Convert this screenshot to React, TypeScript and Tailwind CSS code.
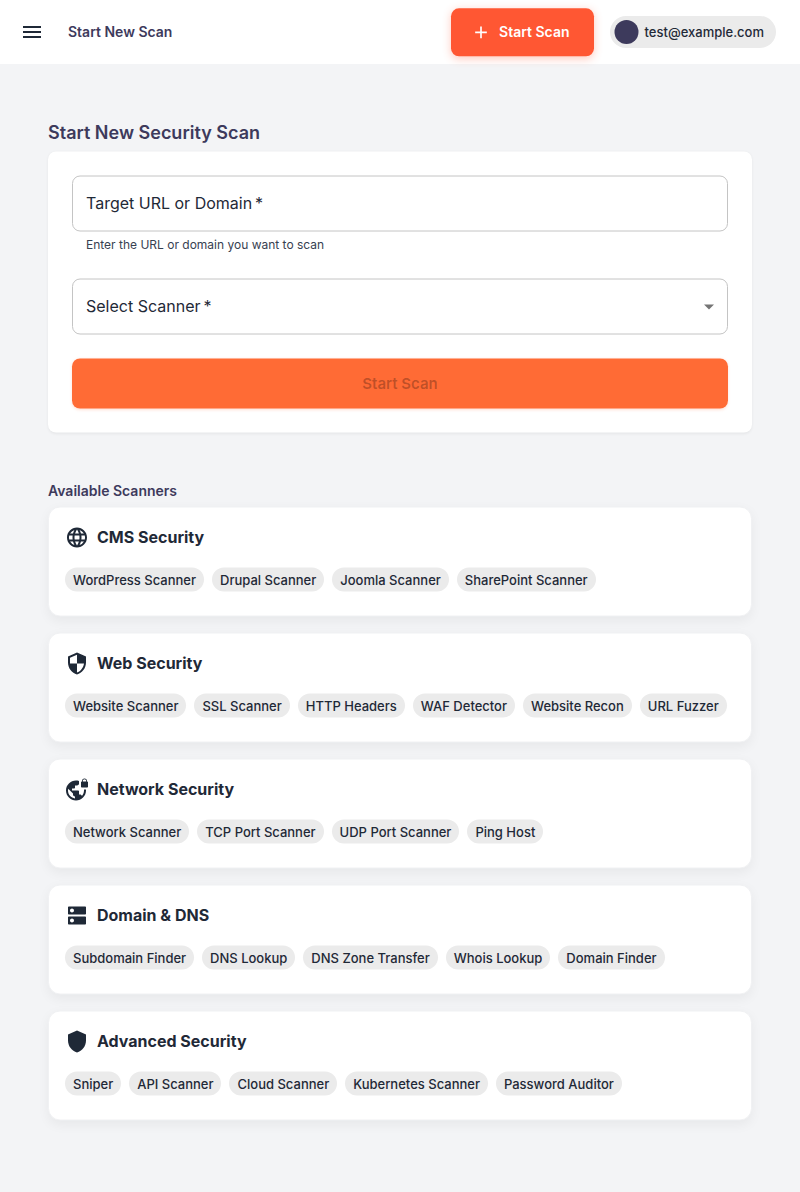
import type { IconType } from "react-icons";
import {
  MdAdd,
  MdArrowDropDown,
  MdDns,
  MdLanguage,
  MdMenu,
  MdSecurity,
  MdShield,
  MdVpnLock,
} from "react-icons/md";

type Category = { title: string; icon: IconType; scanners: string[] };

const categories: Category[] = [
  {
    title: "CMS Security",
    icon: MdLanguage,
    scanners: ["WordPress Scanner", "Drupal Scanner", "Joomla Scanner", "SharePoint Scanner"],
  },
  {
    title: "Web Security",
    icon: MdSecurity,
    scanners: ["Website Scanner", "SSL Scanner", "HTTP Headers", "WAF Detector", "Website Recon", "URL Fuzzer"],
  },
  {
    title: "Network Security",
    icon: MdVpnLock,
    scanners: ["Network Scanner", "TCP Port Scanner", "UDP Port Scanner", "Ping Host"],
  },
  {
    title: "Domain & DNS",
    icon: MdDns,
    scanners: ["Subdomain Finder", "DNS Lookup", "DNS Zone Transfer", "Whois Lookup", "Domain Finder"],
  },
  {
    title: "Advanced Security",
    icon: MdShield,
    scanners: ["Sniper", "API Scanner", "Cloud Scanner", "Kubernetes Scanner", "Password Auditor"],
  },
];

function Header() {
  return (
    <header className="flex h-16 items-center bg-white pr-6 pl-5">
      <button className="flex size-6 items-center justify-center" aria-label="Menu">
        <MdMenu className="size-6" />
      </button>
      <h1 className="ml-6 text-sm font-semibold text-[#3d3a5c]">Start New Scan</h1>
      <button className="ml-auto flex h-12 w-[142.5px] translate-y-[0.3px] items-center rounded-lg bg-[#ff5733] pl-5 text-sm font-semibold text-white shadow-[0_2px_8px_rgba(255,87,51,0.3)]">
        <MdAdd className="mr-2 size-5" />
        Start Scan
      </button>
      <div className="ml-4 flex h-8 items-center rounded-full bg-[#ebebeb] pr-3 pl-[5px] text-[13px] font-medium">
        <span className="mr-1.5 size-6 -translate-x-[0.5px] rounded-full bg-[#3d3a5c]" />
        <span className="pt-0.5">test@example.com</span>
      </div>
    </header>
  );
}

function ScanForm() {
  return (
    <form className="-translate-y-[0.5px] rounded-lg bg-white p-6 shadow-[0_1px_3px_rgba(0,0,0,0.06)]">
      <div className="flex h-14 items-center rounded-lg border border-[#c4c4c4] px-[13px] pb-px text-base">
        Target URL or Domain&thinsp;*
      </div>
      <p className="mt-[3px] px-3.5 text-xs leading-[19.92px] text-[#374151]">
        Enter the URL or domain you want to scan
      </p>
      <div className="mt-6 flex h-14 items-center justify-between rounded-lg border border-[#c4c4c4] pr-1.5 pl-[13px] text-base">
        <span className="pb-px">Select Scanner&thinsp;*</span>
        <MdArrowDropDown className="size-6 text-[#757575]" />
      </div>
      <button
        type="button"
        className="mt-6 flex h-[50px] w-full items-center justify-center rounded-lg bg-[#ff6b35] pt-px text-[15px] font-semibold text-black/26 shadow-[0_1px_3px_rgba(255,107,53,0.2)]"
      >
        Start Scan
      </button>
    </form>
  );
}

function CategoryCard({ title, icon: Icon, scanners }: Category) {
  return (
    <section className="h-[110px] -translate-y-[0.5px] rounded-xl border border-[#f0f1f3] bg-white p-4 shadow-[0_4px_12px_rgba(0,0,0,0.05)]">
      <div className="mb-[18px] flex h-[26px] items-center gap-2">
        <Icon className="mt-0.5 size-6" />
        <h3 className="text-base font-bold">{title}</h3>
      </div>
      <div className="flex gap-2">
        {scanners.map((name) => (
          <span
            key={name}
            className="flex h-6 items-center rounded-full bg-[#ebebeb] px-2 pt-0.5 text-[13px] font-medium whitespace-nowrap"
          >
            {name}
          </span>
        ))}
      </div>
    </section>
  );
}

export default function App() {
  return (
    <div className="min-h-[1192px] bg-[#f3f4f6] font-['Inter',sans-serif] text-[#1f2937]">
      <Header />
      <main className="px-12 pt-[54px]">
        <h2 className="mb-[4.6px] text-lg leading-[29px] font-semibold text-[#3d3a5c]">Start New Security Scan</h2>
        <ScanForm />
        <h2 className="mt-[47px] mb-[5px] text-sm leading-[22px] font-semibold text-[#3d3a5c]">Available Scanners</h2>
        <div className="flex flex-col gap-4">
          {categories.map((category) => (
            <CategoryCard key={category.title} {...category} />
          ))}
        </div>
      </main>
    </div>
  );
}
